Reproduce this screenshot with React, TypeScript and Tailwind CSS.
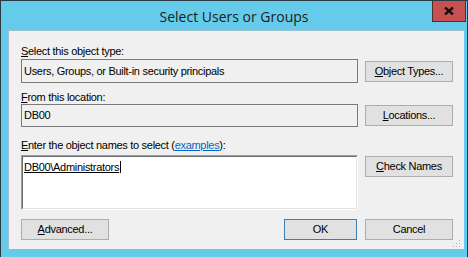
import React from "react";

function Btn({ children, primary = false }: { children: React.ReactNode; primary?: boolean }) {
  return (
    <div
      className={
        "w-[88px] h-[21px] flex items-center justify-center bg-[#e1e1e1] border text-[11px] leading-none text-black " +
        (primary ? "border-[#3c7fb1]" : "border-[#adadad]")
      }
    >
      {children}
    </div>
  );
}

export default function App() {
  return (
    <div
      className="w-[468px] h-[257px] overflow-hidden bg-[#65cbea] border-l border-t border-r border-[#2a3a42] flex flex-col"
      style={{ fontFamily: '"Liberation Sans", Arial, sans-serif' }}
    >
      {/* title bar */}
      <div className="relative h-[29px] shrink-0 flex items-center justify-center">
        <span className="text-[14px] text-[#1b1b1b] pt-[1px]" style={{ fontFamily: '"Open Sans", "Noto Sans", sans-serif' }}>
          Select Users or Groups
        </span>
        <div className="absolute right-[1px] -top-px w-[34px] h-[22px] bg-[#c75050] border border-[#4a3030] flex items-center justify-center">
          <svg width="10" height="8" viewBox="0 0 10 8">
            <path d="M1 0.5 L9 7.5 M9 0.5 L1 7.5" stroke="#111" strokeWidth="2.4" />
          </svg>
        </div>
      </div>

      {/* client area */}
      <div className="ml-[7px] w-[456px] h-[219px] shrink-0 bg-[#f0f0f0] border-t border-l border-[#9fbfd0] relative">
        <div className="pl-[12px] pr-[11px] pt-[14px] text-[11px] tracking-[-0.3px] text-black">
          <div className="leading-[13px]">
            <span className="underline">S</span>elect this object type:
          </div>
          <div className="mt-[1px] flex items-start gap-[7px]">
            <div className="w-[337px] h-[24px] border border-[#7a7a7a] flex items-center pl-[2px]">
              Users, Groups, or Built-in security principals
            </div>
            <div className="mt-[2px]">
              <Btn>
                <span className="underline">O</span>bject Types...
              </Btn>
            </div>
          </div>

          <div className="mt-[8px] leading-[13px]">
            <span className="underline">F</span>rom this location:
          </div>
          <div className="flex items-start gap-[7px]">
            <div className="w-[337px] h-[23px] border border-[#7a7a7a] flex items-center pl-[2px]">DB00</div>
            <div className="mt-[1px]">
              <Btn>
                <span className="underline">L</span>ocations...
              </Btn>
            </div>
          </div>

          <div className="mt-[12px] leading-[13px]">
            <span className="underline">E</span>nter the object names to select (
            <span className="text-[#0066cc] underline">examples</span>):
          </div>
          <div className="mt-[3px] flex items-start gap-[7px]">
            <div className="w-[337px] h-[55px] border-t border-l border-[#a0a0a0] border-r border-b border-r-white border-b-white">
              <div className="w-full h-full bg-white border-t border-l border-[#696969] border-r border-b border-r-[#e3e3e3] border-b-[#e3e3e3] pl-[1px] pt-[2px]">
                <span className="underline border-r border-black pr-[1px] leading-[13px]">DB00\Administrators</span>
              </div>
            </div>
            <div className="mt-[1px]">
              <Btn>
                <span className="underline">C</span>heck Names
              </Btn>
            </div>
          </div>

          <div className="mt-[9px] flex items-center">
            <Btn>
              <span className="underline">A</span>dvanced...
            </Btn>
            <div className="ml-auto flex gap-[8px]">
              <div className="w-[73px] h-[21px] flex items-center justify-center bg-[#e1e1e1] border border-[#3c7fb1]">OK</div>
              <Btn>Cancel</Btn>
            </div>
          </div>
        </div>
        <svg className="absolute right-[3px] bottom-[1px]" width="9" height="9" viewBox="0 0 9 9">
          <g fill="#b0b0b0">
            <rect x="7" y="1" width="1" height="1" />
            <rect x="4" y="4" width="1" height="1" />
            <rect x="7" y="4" width="1" height="1" />
            <rect x="1" y="7" width="1" height="1" />
            <rect x="4" y="7" width="1" height="1" />
            <rect x="7" y="7" width="1" height="1" />
          </g>
        </svg>
      </div>
    </div>
  );
}
